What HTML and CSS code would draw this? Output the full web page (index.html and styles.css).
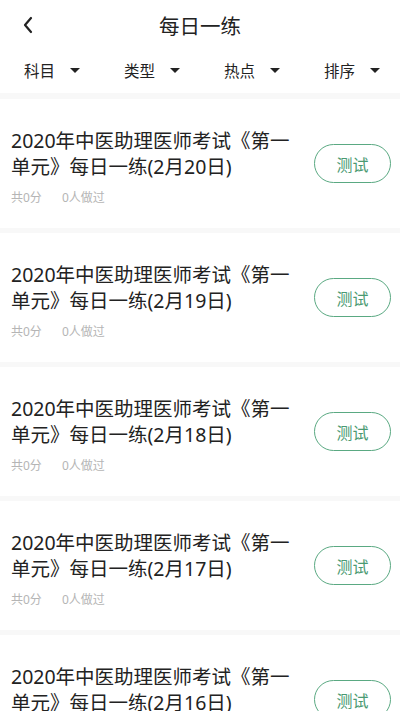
FILE: index.html
```html
<!DOCTYPE html>
<html>
<head>
	<meta charset="utf-8">
	<title>每日一练</title>
	<link rel="stylesheet" href="styles.css">
</head>
<body>
	<div class="header">
		<div class="topBar">
			<span class="back">
				<svg width="12" height="18" viewBox="0 0 12 18"><path d="M9 2 L3 9 L9 16" fill="none" stroke="#222" stroke-width="2.2" stroke-linecap="round" stroke-linejoin="round"/></svg>
			</span>
			<div class="title">每日一练</div>
		</div>
		<div class="filters">
			<div class="filter"><span>科目</span><i class="arrow"></i></div>
			<div class="filter"><span>类型</span><i class="arrow"></i></div>
			<div class="filter"><span>热点</span><i class="arrow"></i></div>
			<div class="filter"><span>排序</span><i class="arrow"></i></div>
		</div>
	</div>
	<div class="list">
		<div class="item">
			<div class="info">
				<div class="name">2020年中医助理医师考试《第一单元》每日一练(2月20日)</div>
				<div class="meta"><span>共0分</span><span>0人做过</span></div>
			</div>
			<div class="btn">测试</div>
		</div>
		<div class="item">
			<div class="info">
				<div class="name">2020年中医助理医师考试《第一单元》每日一练(2月19日)</div>
				<div class="meta"><span>共0分</span><span>0人做过</span></div>
			</div>
			<div class="btn">测试</div>
		</div>
		<div class="item">
			<div class="info">
				<div class="name">2020年中医助理医师考试《第一单元》每日一练(2月18日)</div>
				<div class="meta"><span>共0分</span><span>0人做过</span></div>
			</div>
			<div class="btn">测试</div>
		</div>
		<div class="item">
			<div class="info">
				<div class="name">2020年中医助理医师考试《第一单元》每日一练(2月17日)</div>
				<div class="meta"><span>共0分</span><span>0人做过</span></div>
			</div>
			<div class="btn">测试</div>
		</div>
		<div class="item">
			<div class="info">
				<div class="name">2020年中医助理医师考试《第一单元》每日一练(2月16日)</div>
				<div class="meta"><span>共0分</span><span>0人做过</span></div>
			</div>
			<div class="btn">测试</div>
		</div>
	</div>
</body>
</html>
```

FILE: styles.css
```css
body{
	margin: 0;
	padding: 0;
	background-color: #f8f8f8;
	font-family: "Noto Sans", "Noto Sans CJK SC", sans-serif;
	color: #222;
}
.header{
	height: 93px;
	background-color: #fff;
}
.topBar{
	height: 50px;
	display: flex;
	align-items: center;
	position: relative;
}
.back{
	position: absolute;
	left: 22px;
	top: 16px;
}
.title{
	flex: 1;
	text-align: center;
	font-size: 20.5px;
}
.filters{
	display: flex;
	height: 40px;
	align-items: center;
}
.filter{
	width: 100px;
	padding-left: 24px;
	box-sizing: border-box;
	display: flex;
	align-items: center;
	font-size: 15.5px;
}
.filter span{
	width: 46px;
}
.arrow{
	width: 0;
	height: 0;
	border-left: 5px solid transparent;
	border-right: 5px solid transparent;
	border-top: 5px solid #222;
}
.list{
	padding-top: 6px;
	display: flex;
	flex-direction: column;
	gap: 5px;
}
.item{
	height: 129px;
	background-color: #fff;
	display: flex;
	align-items: center;
	padding: 0 9px 0 11px;
}
.info{
	width: 290px;
	padding-top: 6px;
}
.name{
	font-size: 19.5px;
	line-height: 26px;
}
.meta{
	margin-top: 8px;
	font-size: 12px;
	color: #b5b5b5;
	display: flex;
	gap: 20px;
}
.btn{
	margin-left: auto;
	width: 75px;
	height: 37px;
	border: 1.5px solid #5aa982;
	border-radius: 20px;
	color: #4a9a72;
	font-size: 16px;
	display: flex;
	align-items: center;
	justify-content: center;
}
```
